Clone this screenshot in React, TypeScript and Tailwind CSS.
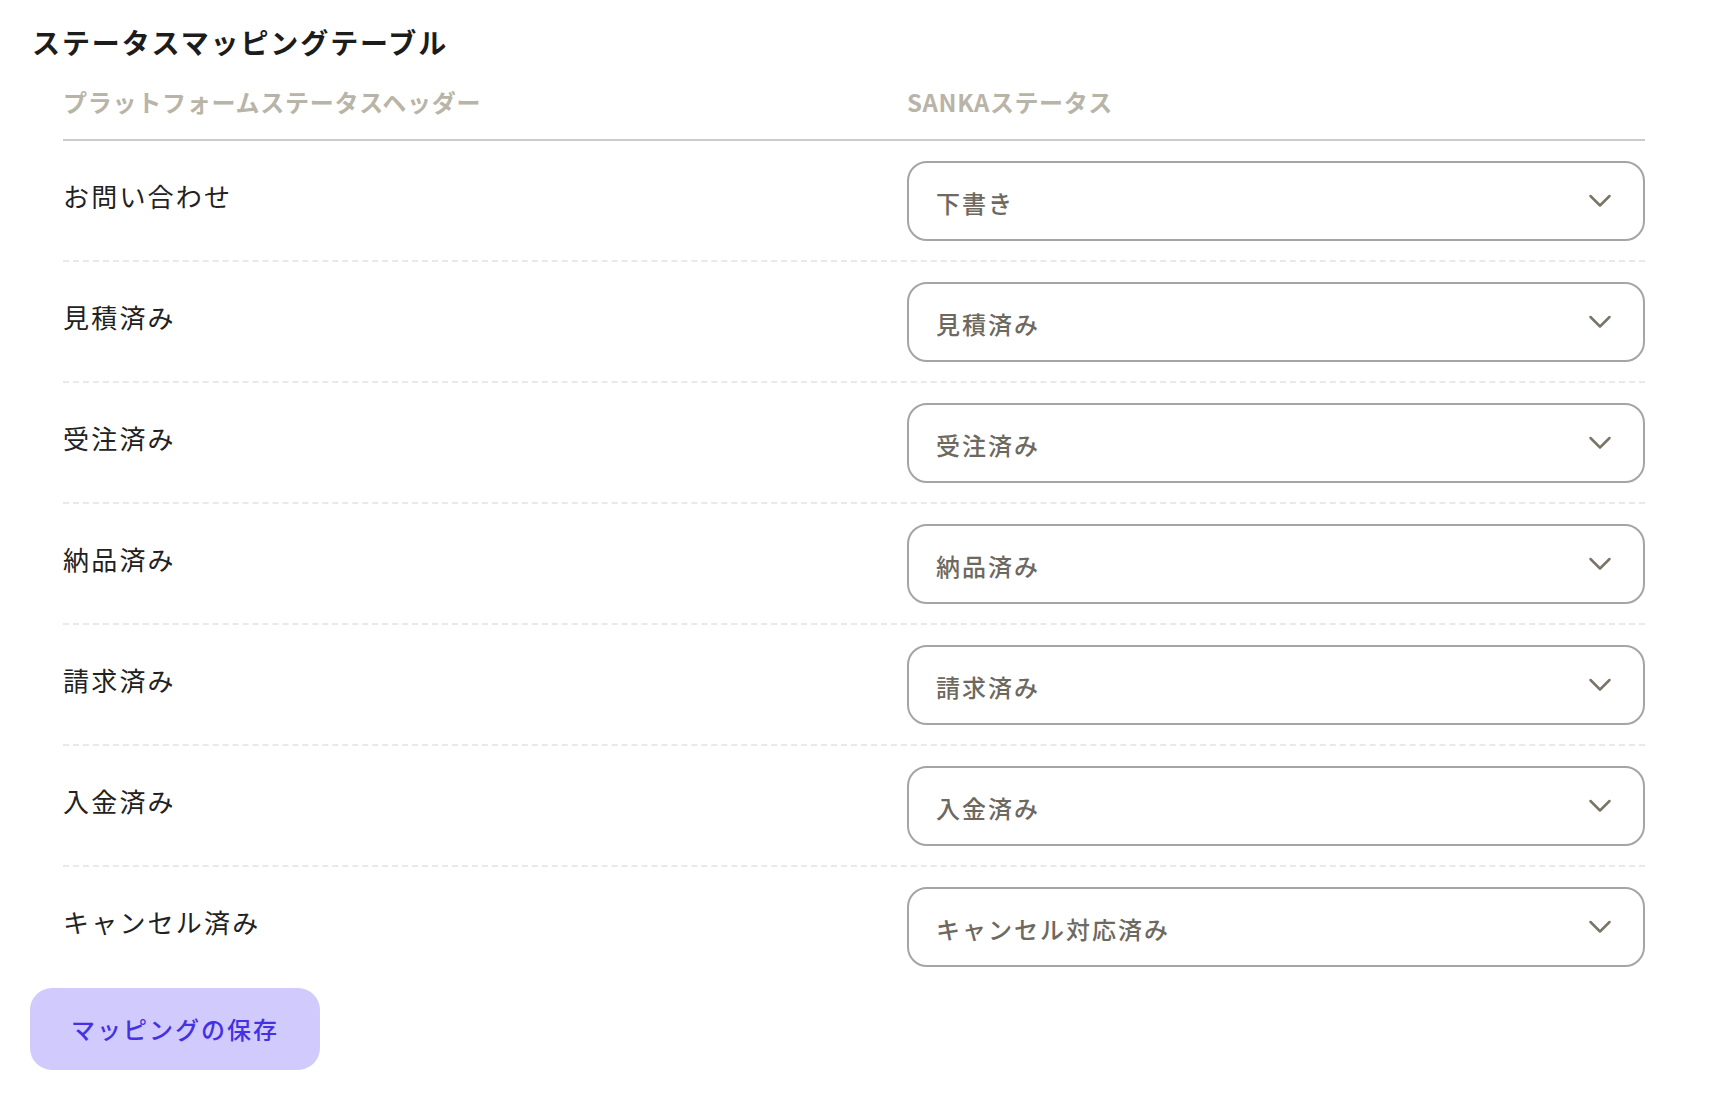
import React from "react";

const rows: [string, string][] = [
  ["お問い合わせ", "下書き"],
  ["見積済み", "見積済み"],
  ["受注済み", "受注済み"],
  ["納品済み", "納品済み"],
  ["請求済み", "請求済み"],
  ["入金済み", "入金済み"],
  ["キャンセル済み", "キャンセル対応済み"],
];

const font = { fontFamily: '"Noto Sans CJK JP", "Noto Sans", sans-serif' };

function Chevron() {
  return (
    <svg width="24" height="14" viewBox="0 0 24 14" fill="none">
      <path d="M2.5 2 L12 11.5 L21.5 2" stroke="#7b7568" strokeWidth="2.5" strokeLinecap="round" strokeLinejoin="round" />
    </svg>
  );
}

export default function App() {
  return (
    <div className="min-h-screen w-full bg-white pl-[30px] pt-[22px]" style={font}>
      <h2 className="pl-[2px] text-[28px] font-bold leading-[40px] tracking-[1.9px] text-[#1c1c1c]">
        ステータスマッピングテーブル
      </h2>
      <div className="ml-[33px] mr-[65px]">
        <div className="grid grid-cols-[844px_1fr] border-b-2 border-[#cbcbcb] pt-[22px] pb-[19px]">
          <div className="text-[24px] font-bold leading-[36px] tracking-[0.75px] text-[#b9b4a8]">
            プラットフォームステータスヘッダー
          </div>
          <div className="text-[24px] font-bold leading-[36px] tracking-[0.6px] text-[#b9b4a8]">
            SANKAステータス
          </div>
        </div>
        {rows.map(([label, value], i) => (
          <div
            key={label}
            className={
              i < rows.length - 1
                ? "grid grid-cols-[844px_1fr] items-start border-b-2 border-dashed border-[#e9e9e9] pt-[20px] pb-[19px]"
                : "grid grid-cols-[844px_1fr] items-start pt-[20px] pb-[21px]"
            }
          >
            <div className="pt-[17px] text-[26px] leading-[36px] tracking-[2.2px] text-[#222222]">{label}</div>
            <div className="flex h-[80px] items-center justify-between rounded-[20px] border-2 border-[#a5a5a5] pl-[27px] pr-[31px]">
              <span className="pt-[4px] text-[24px] font-medium leading-[34px] tracking-[2px] text-[#6e695f]">{value}</span>
              <Chevron />
            </div>
          </div>
        ))}
      </div>
      <button className="flex h-[82px] w-[290px] items-center justify-center rounded-[22px] bg-[#d0cbfc] text-[24px] font-medium tracking-[2px] text-[#4531e3]">
        マッピングの保存
      </button>
    </div>
  );
}
